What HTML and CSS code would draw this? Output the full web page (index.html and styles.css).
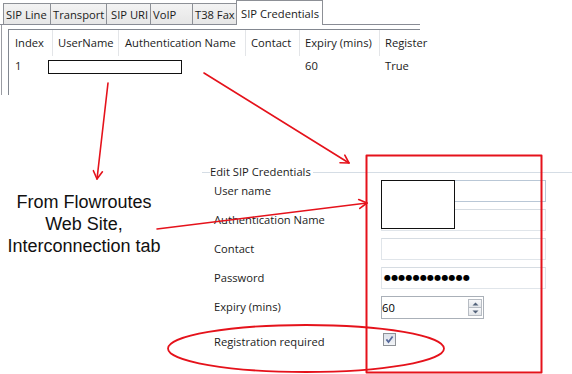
FILE: index.html
```html
<!DOCTYPE html>
<html>
<head>
<meta charset="utf-8">
<link rel="stylesheet" href="styles.css">
</head>
<body>
<div class="page">
  <div class="tabs-area">
    <div class="tabstrip">
      <div class="tab t-line">SIP Line</div>
      <div class="tab t-transport">Transport</div>
      <div class="tab t-uri">SIP URI</div>
      <div class="tab t-voip">VoIP</div>
      <div class="tab t-fax">T38 Fax</div>
      <div class="tab active">SIP Credentials</div>
    </div>
    <div class="panel">
      <div class="list">
        <div class="lrow head">
          <div class="c c1">Index</div>
          <div class="c c2">UserName</div>
          <div class="c c3">Authentication Name</div>
          <div class="c c4">Contact</div>
          <div class="c c5">Expiry (mins)</div>
          <div class="c c6">Register</div>
        </div>
        <div class="lrow">
          <div class="c c1">1</div>
          <div class="c c2"></div>
          <div class="c c3"></div>
          <div class="c c4"></div>
          <div class="c c5">60</div>
          <div class="c c6">True</div>
        </div>
        <div class="redact-row"></div>
      </div>
    </div>
  </div>

  <div class="lower">
    <div class="caption">From Flowroutes<br>Web Site,<br>Interconnection tab</div>
    <div class="group">
      <div class="group-title"><span>Edit SIP Credentials</span></div>
      <div class="fields">
        <div class="lbl">User name</div>
        <div class="input focus"></div>
        <div class="lbl">Authentication Name</div>
        <div class="input"></div>
        <div class="lbl">Contact</div>
        <div class="input"></div>
        <div class="lbl">Password</div>
        <div class="input pw">●●●●●●●●●●●●</div>
        <div class="lbl">Expiry (mins)</div>
        <div class="spin">
          <span class="spin-val">60</span>
          <span class="spin-btns">
            <span class="sb"><svg width="7" height="4" viewBox="0 0 7 4"><path d="M0.5 3.5 L3.5 0.5 L6.5 3.5 Z" fill="#52627a"/></svg></span>
            <span class="sb"><svg width="7" height="4" viewBox="0 0 7 4"><path d="M0.5 0.5 L3.5 3.5 L6.5 0.5 Z" fill="#52627a"/></svg></span>
          </span>
        </div>
        <div class="lbl check-lbl">Registration required</div>
        <div class="check-cell">
          <span class="checkbox"><svg width="11" height="11" viewBox="0 0 11 11"><path d="M2.4 5.4 L4.5 8 L8.6 2.4" fill="none" stroke="#55689a" stroke-width="1.7"/></svg></span>
        </div>
        <div class="redact-user"></div>
      </div>
    </div>
  </div>

  <svg class="marks" width="572" height="374" viewBox="0 0 572 374">
    <g fill="none" stroke="#e5121b" stroke-width="1.6" stroke-linecap="round" stroke-linejoin="round">
      <path d="M108 83 L97 179"/>
      <path d="M102.4 171.8 L97 179 L93.4 170.7"/>
      <path d="M204 73 L349 163"/>
      <path d="M344.8 155.1 L349 163 L340 162.7"/>
      <path d="M157 229 L367 203"/>
      <path d="M358.7 199.5 L367 203 L359.8 208.4"/>
      <rect x="366.5" y="155.5" width="175" height="217" stroke-width="2"/>
      <ellipse cx="306" cy="348.5" rx="138" ry="23.5" stroke-width="1.8"/>
    </g>
  </svg>
</div>
</body>
</html>
```

FILE: styles.css
```css
* { box-sizing: border-box; }

html, body {
  margin: 0;
  padding: 0;
  background: #ffffff;
}

.page {
  position: relative;
  width: 572px;
  height: 374px;
  overflow: hidden;
  font-family: "Open Sans", "Noto Sans", sans-serif;
  font-size: 11.2px;
  color: #1b1b1b;
}

/* ---------- tabs ---------- */
.tabs-area {
  width: 420px;
}

.tabstrip {
  display: flex;
  align-items: flex-end;
  height: 25px;
  padding-left: 3px;
  border-bottom: 1px solid #898c95;
}

.tab {
  height: 21px;
  border: 1px solid #8d9096;
  border-bottom: none;
  background: linear-gradient(#f3f3f3, #e6e6e6);
  padding: 1px 0 0 2px;
  line-height: 20px;
  white-space: nowrap;
  margin-left: -1px;
}

.tab:first-child { margin-left: 0; }

.t-line { width: 48px; }
.t-transport { width: 57px; }
.t-uri { width: 45px; padding-left: 4px; }
.t-voip { width: 43px; }
.t-fax { width: 45px; }

.tab.active {
  width: 87px;
  height: 25px;
  margin-bottom: -1px;
  background: #ffffff;
  padding: 3px 0 0 4px;
  position: relative;
}

.panel {
  height: 70px;
  margin-left: 1px;
  border-left: 1px solid #9a9ca3;
  padding: 4px 0 0 6px;
}

.list {
  position: relative;
  height: 66px;
  border-left: 1px solid #828790;
  border-top: 1px solid #828790;
}

.lrow {
  display: flex;
  height: 20px;
  line-height: 20px;
}

.lrow.head {
  height: 26px;
  line-height: 26px;
}

.c {
  flex: none;
  padding-left: 5px;
  white-space: nowrap;
}

.head .c { border-right: 1px solid #e3e5e8; }

.c1 { width: 44px; padding-left: 6px; }
.c2 { width: 66px; }
.c3 { width: 127px; padding-left: 6px; }
.c4 { width: 54px; }
.c5 { width: 80px; }
.c6 { width: 40px; }
.head .c6 { border-right: none; }

.redact-row {
  position: absolute;
  left: 39px;
  top: 30px;
  width: 134px;
  height: 14px;
  border: 1px solid #111;
  background: #fff;
}

/* ---------- lower area ---------- */
.lower {
  display: flex;
}

.caption {
  width: 168px;
  margin-top: 96px;
  font-family: "Liberation Sans", Arial, sans-serif;
  font-size: 18px;
  line-height: 22px;
  text-align: center;
  color: #111;
}

.group {
  flex: 1;
  margin-left: 34px;
  margin-top: 69px;
}

.group-title {
  display: flex;
  align-items: center;
  height: 16px;
  line-height: 16px;
}

.group-title::before {
  content: "";
  width: 8px;
  border-top: 1px solid #d5dde5;
}

.group-title::after {
  content: "";
  flex: 1;
  margin-left: 2px;
  border-top: 1px solid #d5dde5;
}

.fields {
  position: relative;
  display: grid;
  grid-template-columns: 167px 165px;
  grid-auto-rows: 22px;
  row-gap: 7px;
  padding-left: 12px;
}

.lbl {
  line-height: 22px;
  white-space: nowrap;
}

.input {
  height: 22px;
  border: 1px solid #e0e5ea;
  border-top-color: #d6dce2;
  background: #fff;
}

.input.focus {
  border-color: #b9c7d6;
}

.input.pw {
  font-family: "DejaVu Sans", sans-serif;
  font-size: 8px;
  letter-spacing: 0.2px;
  line-height: 20px;
  padding-left: 2px;
  color: #000;
}

.spin {
  display: flex;
  justify-content: space-between;
  width: 103px;
  height: 23px;
  border: 1px solid #aab0b8;
  background: #fff;
}

.spin-val {
  padding-left: 0;
  line-height: 21px;
  color: #000;
}

.spin-btns {
  display: flex;
  flex-direction: column;
  justify-content: center;
  padding-right: 1px;
}

.sb {
  display: flex;
  align-items: center;
  justify-content: center;
  width: 14px;
  height: 9px;
  border: 1px solid #b7bcc3;
  background: linear-gradient(#f7f8fa, #e3e6ea);
}

.sb + .sb { margin-top: -1px; }

.check-lbl,
.check-cell {
  margin-top: 6px;
}

.check-cell {
  display: flex;
  align-items: center;
  padding-left: 2px;
}

.checkbox {
  display: flex;
  align-items: center;
  justify-content: center;
  width: 13px;
  height: 13px;
  border: 1px solid #8e9297;
  background: linear-gradient(#dde2ea, #f2f4f7);
}

.redact-user {
  position: absolute;
  left: 179px;
  top: 0;
  width: 74px;
  height: 49px;
  border: 1px solid #111;
  background: #fff;
}

/* ---------- annotations ---------- */
.marks {
  position: absolute;
  left: 0;
  top: 0;
  pointer-events: none;
}
```
